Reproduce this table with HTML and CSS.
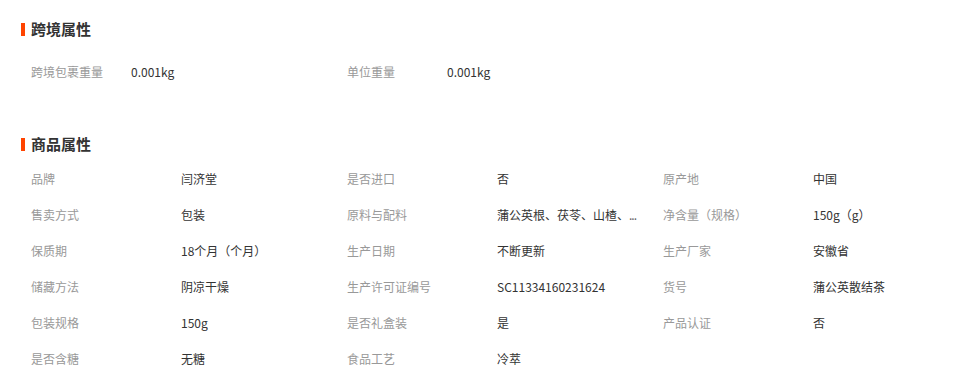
FILE: index.html
```html
<!DOCTYPE html>
<html lang="zh-CN">
<head>
<meta charset="utf-8">
<title>商品属性</title>
<link rel="stylesheet" href="styles.css">
</head>
<body>
<div class="page">
  <section class="block block-cross">
    <h2 class="title"><span class="bar"></span>跨境属性</h2>
    <div class="grid grid-cross">
      <div class="cell"><span class="label">跨境包裹重量</span><span class="value">0.001kg</span></div>
      <div class="cell"><span class="label">单位重量</span><span class="value">0.001kg</span></div>
    </div>
  </section>
  <section class="block block-goods">
    <h2 class="title"><span class="bar"></span>商品属性</h2>
    <div class="grid grid-goods">
      <div class="cell"><span class="label">品牌</span><span class="value">闫济堂</span></div>
      <div class="cell"><span class="label">是否进口</span><span class="value">否</span></div>
      <div class="cell"><span class="label">原产地</span><span class="value">中国</span></div>
      <div class="cell"><span class="label">售卖方式</span><span class="value">包装</span></div>
      <div class="cell"><span class="label">原料与配料</span><span class="value">蒲公英根、茯苓、山楂、<span class="dots">...</span></span></div>
      <div class="cell"><span class="label">净含量（规格）</span><span class="value">150g（g）</span></div>
      <div class="cell"><span class="label">保质期</span><span class="value">18个月（个月）</span></div>
      <div class="cell"><span class="label">生产日期</span><span class="value">不断更新</span></div>
      <div class="cell"><span class="label">生产厂家</span><span class="value">安徽省</span></div>
      <div class="cell"><span class="label">储藏方法</span><span class="value">阴凉干燥</span></div>
      <div class="cell"><span class="label">生产许可证编号</span><span class="value">SC11334160231624</span></div>
      <div class="cell"><span class="label">货号</span><span class="value">蒲公英散结茶</span></div>
      <div class="cell"><span class="label">包装规格</span><span class="value">150g</span></div>
      <div class="cell"><span class="label">是否礼盒装</span><span class="value">是</span></div>
      <div class="cell"><span class="label">产品认证</span><span class="value">否</span></div>
      <div class="cell"><span class="label">是否含糖</span><span class="value">无糖</span></div>
      <div class="cell"><span class="label">食品工艺</span><span class="value">冷萃</span></div>
    </div>
  </section>
</div>
</body>
</html>
```
FILE: styles.css
```css
html, body {
  margin: 0;
  padding: 0;
  background: #fff;
}
body {
  font-family: "Noto Sans CJK SC", "Noto Sans", "Liberation Sans", sans-serif;
  font-size: 12px;
  color: #333;
}
.page {
  padding: 19px 0 0 21px;
}
.title {
  display: flex;
  align-items: center;
  gap: 6px;
  margin: 0;
  height: 20px;
  line-height: 20px;
  font-size: 15px;
  font-weight: bold;
  color: #333;
}
.bar {
  display: block;
  width: 4px;
  height: 13px;
  background: #ff4400;
}
.grid {
  display: grid;
  grid-template-columns: repeat(3, 316px);
  padding-left: 10px;
}
.grid-cross {
  margin-top: 15px;
  grid-template-columns: repeat(2, 316px);
}
.block-goods {
  margin-top: 44px;
}
.grid-goods {
  margin-top: 7px;
}
.cell {
  display: flex;
  height: 36px;
  line-height: 36px;
  white-space: nowrap;
}
.label {
  flex: 0 0 150px;
  color: #999;
}
.grid-cross .label {
  flex-basis: 100px;
}
.value {
  color: #333;
}
.dots {
  letter-spacing: -1px;
  color: #666;
}
```
